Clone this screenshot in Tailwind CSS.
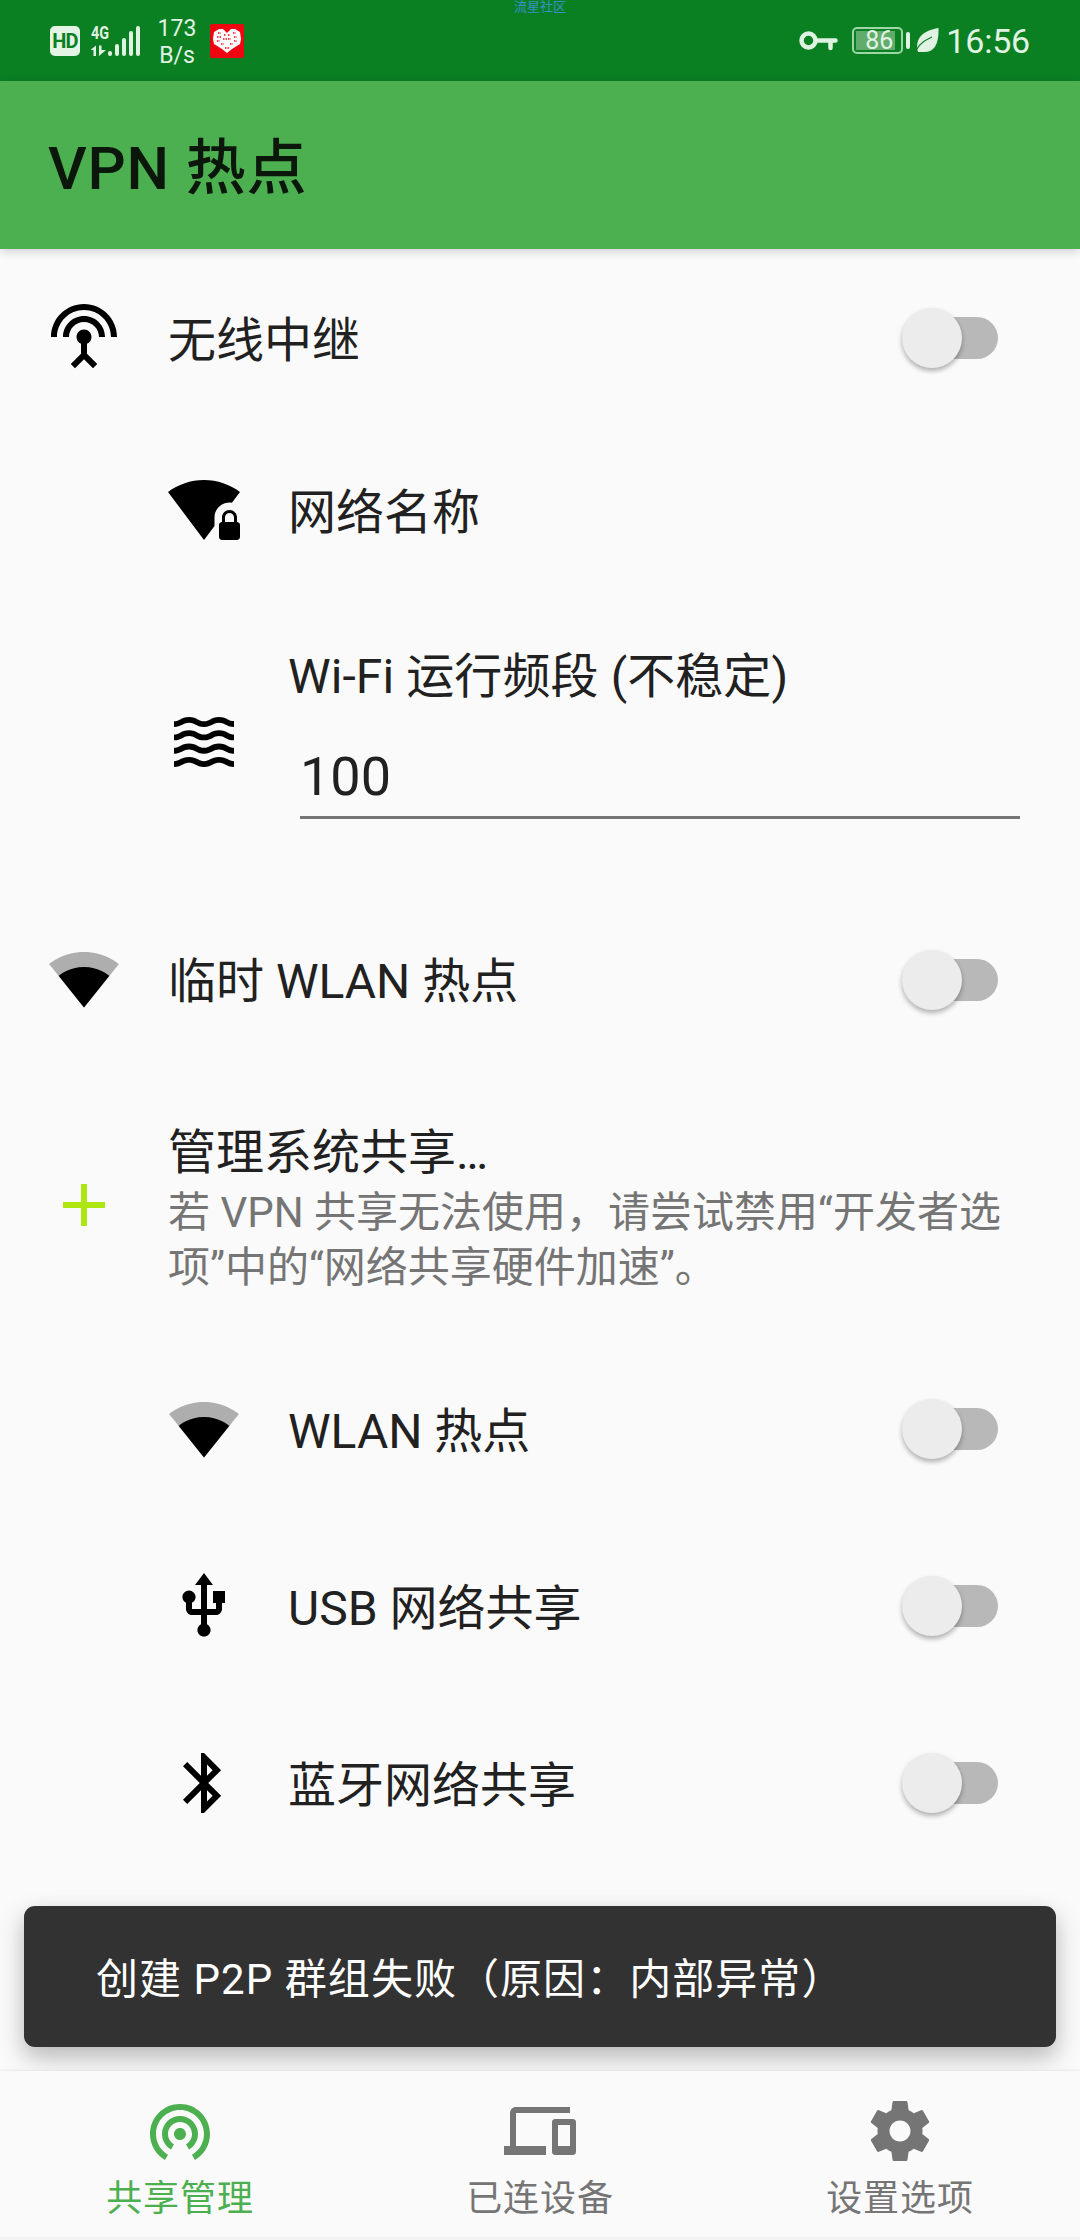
<!DOCTYPE html>
<html lang="zh-CN">
<head>
  <meta charset="UTF-8" />
  <title>VPN 热点</title>
  <script src="https://cdn.jsdelivr.net/npm/@tailwindcss/browser@4"></script>
</head>
<body class="bg-[#fafafa] w-[1080px] h-[2240px] flex flex-col overflow-hidden text-[#212121] font-[Roboto,'Noto_Sans_CJK_SC',sans-serif] [text-spacing-trim:space-all]">

  <!-- Status bar -->
  <header class="relative h-[81px] shrink-0 bg-[#0a8023] text-[#e0f3e2] flex items-center pl-[50px] pr-[50px]">
    <span class="absolute top-0 left-0 w-full text-center text-[13px] leading-[14px] text-[#3a8fc8]">流星社区</span>
    <div class="w-[30px] h-[30px] rounded-[5px] bg-[#e3f3e4] text-[#0a8023] text-[20px] leading-[30px] font-bold text-center tracking-[-0.8px]">HD</div>
    <div class="ml-[11px] w-[51px] h-[32px] relative">
      <span class="absolute left-0 -top-[3px] text-[18px] leading-[22px] font-bold origin-left scale-x-80">4G</span>
      <svg class="w-[51px] h-[32px]" viewBox="1 0 51 32" fill="#e0f3e2">
        <path d="M0.500 25 6 20.500v10.500H3.500V25zM9 20.500h2.500V25H16l-7 6z" />
        <rect x="18" y="26" width="4" height="5" rx="2" />
        <rect x="25" y="19" width="4" height="12" rx="2" />
        <rect x="32" y="13" width="4" height="18" rx="2" />
        <rect x="39" y="6" width="4" height="25" rx="2" />
        <rect x="46" y="1" width="4" height="30" rx="2" />
      </svg>
    </div>
    <div class="ml-[15px] w-[40px] pt-[2px] text-center text-[23px] leading-[27px]">173<br />B/s</div>
    <svg class="ml-[13px] w-[34px] h-[34px]" viewBox="0 0 34 34">
      <rect width="34" height="34" rx="2" fill="#ee0510" />
      <path d="M17 29 12 25 4 20 3 15 4 8 9 5h4l4 4 4-4h4l5 3 1 7-1 5-8 5z" fill="#fff" />
      <path d="M8 9h3M7 13h4M7 17h3M14 11h2M23 9h3M24 13h3M24 17h3M18 11h2M13 15h8M11 20h3M20 20h3M15 24h4" stroke="#ee0510" stroke-width="1.500" stroke-dasharray="1.500 1" />
    </svg>
    <div class="flex-1"></div>
    <svg class="w-[39px] h-[20px]" viewBox="0 0 39 20" fill="none" stroke="#e0f3e2" stroke-width="4.500">
      <circle cx="9.500" cy="9.500" r="7" />
      <path d="M17 9.500h19.500M31.500 10v7" stroke-linecap="round" />
    </svg>
    <div class="ml-[14px] w-[51px] h-[27px] rounded-[5px] border-2 border-[#9fd6a5] p-[2px]">
      <div class="w-[39px] h-[19px] bg-[#61ac6c] text-[25px] leading-[20px] text-right pr-[2px]">86</div>
    </div>
    <div class="ml-[3px] w-[4px] h-[17px] rounded-full bg-[#e0f3e2]"></div>
    <svg class="ml-[6px] w-[23px] h-[25px]" viewBox="0 0 23 25">
      <path d="M22.500 0C23 15 19 24 8 24 5 24 4 24 2 24-1 14 3 3 22.500 0z" fill="#e0f3e2" />
      <path d="M1 21C5 14 10 12 16 9" stroke="#0a8023" stroke-width="1.200" fill="none" />
    </svg>
    <div class="ml-[7px] text-[34px] leading-[40px] tracking-[-0.2px]">16:56</div>
  </header>

  <!-- App bar -->
  <div class="relative z-10 h-[168px] shrink-0 bg-[#4caf50] flex items-center px-[48px] shadow-[0_2px_10px_rgba(0,0,0,0.18)]">
    <h1 class="pt-[8px] text-[60px] leading-[70px] font-medium tracking-[0.8px] text-black/87">VPN 热点</h1>
  </div>

  <!-- Tethering list -->
  <main class="relative flex-1 text-[48px] leading-[56px]">
    <div class="h-[176px] flex items-center px-[48px]">
      <svg class="w-[72px] h-[72px]" viewBox="0 0 24 24"><path d="M12 5c-3.870 0-7 3.130-7 7h2c0-2.760 2.240-5 5-5s5 2.240 5 5h2c0-3.870-3.130-7-7-7zm1 9.290c.88-.39 1.500-1.260 1.500-2.290 0-1.380-1.120-2.500-2.500-2.500S9.500 10.620 9.500 12c0 1.020.62 1.900 1.500 2.290v3.300L7.590 21 9 22.410l3-3 3 3L16.410 21 13 17.590v-3.300zM12 1C5.930 1 1 5.930 1 12h2c0-4.970 4.030-9 9-9s9 4.030 9 9h2c0-6.070-4.930-11-11-11z" /></svg>
      <span class="ml-[48px] flex-1 pt-[7px]">无线中继</span>
      <div class="switch"></div>
    </div>

    <div class="h-[170px] flex items-center pl-[168px] pr-[48px]">
      <svg class="w-[72px] h-[72px]" viewBox="0 0 24 24"><path d="M20.500 9.500c.28 0 .55.04.81.08L24 6c-3.340-2.510-7.500-4-12-4S3.340 3.490 0 6l12 16 3.500-4.670V14.500c0-2.760 2.240-5 5-5zM23 16v-1.500c0-1.380-1.120-2.500-2.500-2.500S18 13.120 18 14.500V16c-.55 0-1 .45-1 1v4c0 .55.45 1 1 1h5c.55 0 1-.45 1-1v-4c0-.55-.45-1-1-1zm-1 0h-3v-1.500c0-.83.67-1.500 1.500-1.500s1.500.67 1.500 1.500V16z" /></svg>
      <span class="ml-[48px] pt-[6px]">网络名称</span>
    </div>

    <div class="h-[294px] flex items-center pl-[168px] pr-[48px]">
      <svg class="w-[72px] h-[72px]" viewBox="0 0 24 24"><path d="M17 16.990c-1.350 0-2.200.42-2.950.8-.65.33-1.180.6-2.050.6-.9 0-1.400-.25-2.050-.6-.75-.38-1.570-.8-2.950-.8s-2.200.42-2.950.8c-.65.33-1.170.6-2.050.6v1.950c1.350 0 2.200-.42 2.950-.8.65-.33 1.170-.6 2.050-.6s1.400.25 2.050.6c.75.38 1.570.8 2.950.8s2.200-.42 2.950-.8c.65-.33 1.180-.6 2.050-.6.9 0 1.400.25 2.050.6.75.38 1.580.8 2.950.8v-1.950c-.9 0-1.400-.25-2.050-.6-.75-.38-1.600-.8-2.950-.8zm0-4.450c-1.350 0-2.200.43-2.950.8-.65.32-1.180.6-2.050.6-.9 0-1.400-.25-2.050-.6-.75-.38-1.570-.8-2.950-.8s-2.200.43-2.950.8c-.65.32-1.170.6-2.050.6v1.950c1.350 0 2.200-.43 2.950-.8.65-.35 1.150-.6 2.050-.6s1.400.25 2.050.6c.75.38 1.570.8 2.950.8s2.200-.43 2.950-.8c.65-.35 1.150-.6 2.050-.6s1.400.25 2.050.6c.75.38 1.580.8 2.950.8v-1.950c-.9 0-1.400-.25-2.050-.6-.75-.38-1.600-.8-2.950-.8zm2.950-8.080c-.75-.38-1.580-.8-2.950-.8s-2.200.42-2.950.8c-.65.32-1.180.6-2.050.6-.9 0-1.400-.25-2.050-.6-.75-.37-1.570-.8-2.950-.8s-2.200.42-2.950.8c-.65.33-1.170.6-2.050.6v1.930c1.350 0 2.200-.43 2.950-.8.65-.33 1.170-.6 2.050-.6s1.400.25 2.050.6c.75.38 1.570.8 2.950.8s2.200-.43 2.950-.8c.65-.32 1.180-.6 2.050-.6.9 0 1.400.25 2.050.6.75.38 1.580.8 2.950.8V5.040c-.9 0-1.400-.25-2.050-.58zM17 8.090c-1.350 0-2.200.43-2.950.8-.65.35-1.150.6-2.050.6s-1.400-.25-2.050-.6c-.75-.38-1.570-.8-2.950-.8s-2.200.43-2.950.8c-.65.35-1.150.6-2.050.6v1.950c1.350 0 2.200-.43 2.950-.8.65-.32 1.180-.6 2.050-.6s1.400.25 2.050.6c.75.38 1.570.8 2.950.8s2.200-.43 2.950-.8c.65-.32 1.180-.6 2.050-.6.9 0 1.400.25 2.050.6.75.38 1.580.8 2.950.8V9.490c-.9 0-1.400-.25-2.050-.6-.75-.38-1.600-.8-2.950-.8z" /></svg>
      <div class="ml-[48px] mb-[16px] flex-1">
        <div class="tracking-[0.1px]">Wi-Fi 运行频段 (不稳定)</div>
        <div class="mx-[12px] mt-[40px] h-[74px] border-b-3 border-[#757575] text-[54px] leading-[64px]">100</div>
      </div>
    </div>

    <div class="h-[180px] flex items-center px-[48px]">
      <svg class="w-[72px] h-[72px]" viewBox="0 0 24 24"><path fill-opacity=".3" d="M12.010 21.490L23.640 7c-.45-.34-4.930-4-11.640-4C5.280 3 .81 6.660.36 7l11.630 14.490.01.01.01-.01z" /><path d="M3.530 10.950l8.460 10.540.01.01.01-.01 8.460-10.540C20.040 10.620 16.810 8 12 8c-4.810 0-8.040 2.620-8.470 2.950z" /></svg>
      <span class="ml-[48px] flex-1 pt-[6px]">临时 WLAN 热点</span>
      <div class="switch"></div>
    </div>

    <div class="h-[271px] flex items-center px-[48px]">
      <svg class="w-[72px] h-[72px]" viewBox="0 0 24 24" fill="#aee612"><path d="M19 13h-6v6h-2v-6H5v-2h6V5h2v6h6v2z" /></svg>
      <div class="ml-[48px] pt-[10px]">
        <div>管理系统共享…</div>
        <div class="mt-[4px] text-[42px] leading-[55px] text-[#757575] whitespace-nowrap">若 VPN 共享无法使用，请尝试禁用“开发者选<br />项”中的“网络共享硬件加速”。</div>
      </div>
    </div>

    <div class="h-[177px] flex items-center pl-[168px] pr-[48px]">
      <svg class="w-[72px] h-[72px]" viewBox="0 0 24 24"><path fill-opacity=".3" d="M12.010 21.490L23.640 7c-.45-.34-4.930-4-11.640-4C5.280 3 .81 6.660.36 7l11.630 14.490.01.01.01-.01z" /><path d="M3.530 10.950l8.460 10.540.01.01.01-.01 8.460-10.540C20.040 10.620 16.810 8 12 8c-4.810 0-8.040 2.620-8.470 2.950z" /></svg>
      <span class="ml-[48px] flex-1 pt-[6px]">WLAN 热点</span>
      <div class="switch"></div>
    </div>

    <div class="h-[177px] flex items-center pl-[168px] pr-[48px]">
      <svg class="w-[72px] h-[72px]" viewBox="0 0 24 24"><path d="M15 7v4h1v2h-3V5h2l-3-4-3 4h2v8H8v-2.070c.7-.37 1.200-1.080 1.200-1.930 0-1.210-.99-2.200-2.200-2.200-1.210 0-2.200.99-2.200 2.200 0 .85.5 1.560 1.200 1.930V13c0 1.110.89 2 2 2h3v3.050c-.71.37-1.200 1.100-1.200 1.950 0 1.220.99 2.200 2.200 2.200 1.210 0 2.200-.98 2.200-2.200 0-.85-.49-1.580-1.200-1.950V15h3c1.110 0 2-.89 2-2v-2h1V7h-4z" /></svg>
      <span class="ml-[48px] flex-1 pt-[6px]">USB 网络共享</span>
      <div class="switch"></div>
    </div>

    <div class="h-[177px] flex items-center pl-[168px] pr-[48px]">
      <svg class="w-[72px] h-[72px]" viewBox="0 0 24 24"><path d="M17.710 7.710L12 2h-1v7.590L6.410 5 5 6.410 10.590 12 5 17.590 6.410 19 11 14.410V22h1l5.710-5.710-4.300-4.290 4.300-4.290zM13 5.830l1.880 1.880L13 9.590V5.830zm1.880 10.460L13 18.170v-3.760l1.880 1.880z" /></svg>
      <span class="ml-[48px] flex-1 pt-[6px]">蓝牙网络共享</span>
      <div class="switch"></div>
    </div>

    <!-- Snackbar -->
    <div class="absolute left-[24px] right-[24px] bottom-[24px] h-[141px] rounded-[11px] bg-[#323232] text-white flex items-center px-[72px] pt-[6px] text-[42px] leading-[50px] tracking-[1.05px] shadow-[0_10px_24px_rgba(0,0,0,0.28)]">创建 P2P 群组失败（原因：内部异常）</div>
  </main>

  <!-- Bottom navigation -->
  <nav class="relative z-10 h-[169px] shrink-0 bg-[#fafafa] border-b-3 border-[#f3f3f3] grid grid-cols-3 text-[36px] leading-[44px] tracking-[0.9px] text-[#757575] fill-[#757575] shadow-[0_0_3px_rgba(0,0,0,0.12)]">
    <div class="flex flex-col items-center pt-[24px] text-[#4caf50] fill-[#4caf50]">
      <svg class="w-[72px] h-[72px]" viewBox="0 0 24 24"><path d="M12 11c-1.100 0-2 .9-2 2s.9 2 2 2 2-.9 2-2-.9-2-2-2zm6 2c0-3.310-2.690-6-6-6s-6 2.690-6 6c0 2.220 1.210 4.150 3 5.190l1-1.740c-1.190-.7-2-1.970-2-3.450 0-2.210 1.790-4 4-4s4 1.790 4 4c0 1.480-.81 2.750-2 3.450l1 1.740c1.790-1.040 3-2.970 3-5.190zM12 3C6.480 3 2 7.480 2 13c0 3.700 2.010 6.920 4.990 8.650l1-1.730C5.610 18.530 4 15.960 4 13c0-4.420 3.580-8 8-8s8 3.580 8 8c0 2.960-1.610 5.530-4 6.920l1 1.730c2.990-1.730 5-4.950 5-8.650 0-5.520-4.480-10-10-10z" /></svg>
      <span class="mt-[10px]">共享管理</span>
    </div>
    <div class="flex flex-col items-center pt-[24px]">
      <svg class="w-[72px] h-[72px]" viewBox="0 0 24 24"><path d="M4 6h18V4H4c-1.100 0-2 .9-2 2v11H0v3h14v-3H4V6zm19 2h-6c-.55 0-1 .45-1 1v10c0 .55.45 1 1 1h6c.55 0 1-.45 1-1V9c0-.55-.45-1-1-1zm-1 9h-4v-7h4v7z" /></svg>
      <span class="mt-[10px]">已连设备</span>
    </div>
    <div class="flex flex-col items-center pt-[24px]">
      <svg class="w-[72px] h-[72px]" viewBox="0 0 24 24"><path d="M19.430 12.980c.04-.32.07-.64.07-.98s-.03-.66-.07-.98l2.110-1.650c.19-.15.24-.42.12-.64l-2-3.460c-.12-.22-.39-.3-.61-.22l-2.490 1c-.52-.4-1.080-.73-1.690-.98l-.38-2.650C14.460 2.180 14.250 2 14 2h-4c-.25 0-.46.18-.49.42l-.38 2.650c-.61.25-1.170.59-1.690.98l-2.490-1c-.23-.09-.49 0-.61.22l-2 3.460c-.13.22-.07.49.12.64l2.110 1.650c-.04.32-.07.65-.07.98s.03.66.07.98l-2.110 1.650c-.19.15-.24.42-.12.64l2 3.460c.12.22.39.3.61.22l2.490-1c.52.4 1.080.73 1.690.98l.38 2.650c.03.24.24.42.49.42h4c.25 0 .46-.18.49-.42l.38-2.650c.61-.25 1.170-.59 1.690-.98l2.490 1c.23.09.49 0 .61-.22l2-3.460c.12-.22.07-.49-.12-.64l-2.110-1.650zM12 15.500c-1.930 0-3.500-1.570-3.500-3.500s1.570-3.500 3.500-3.500 3.500 1.570 3.500 3.500-1.570 3.500-3.500 3.500z" /></svg>
      <span class="mt-[10px]">设置选项</span>
    </div>
  </nav>

  <script>
    // every switch on this screen is off
    document.querySelectorAll('.switch').forEach((el) => {
      el.className = 'w-[96px] h-[60px] mr-[34px] mt-[1px] flex items-center';
      el.innerHTML =
        `<span class="relative z-10 w-[60px] h-[60px] rounded-full bg-[#ececec] shadow-[0_3px_5px_rgba(0,0,0,0.3)]"></span>
         <span class="w-[90px] h-[42px] -ml-[54px] rounded-full bg-[#b8b8b8]"></span>`;
    });
  </script>

</body>
</html>
